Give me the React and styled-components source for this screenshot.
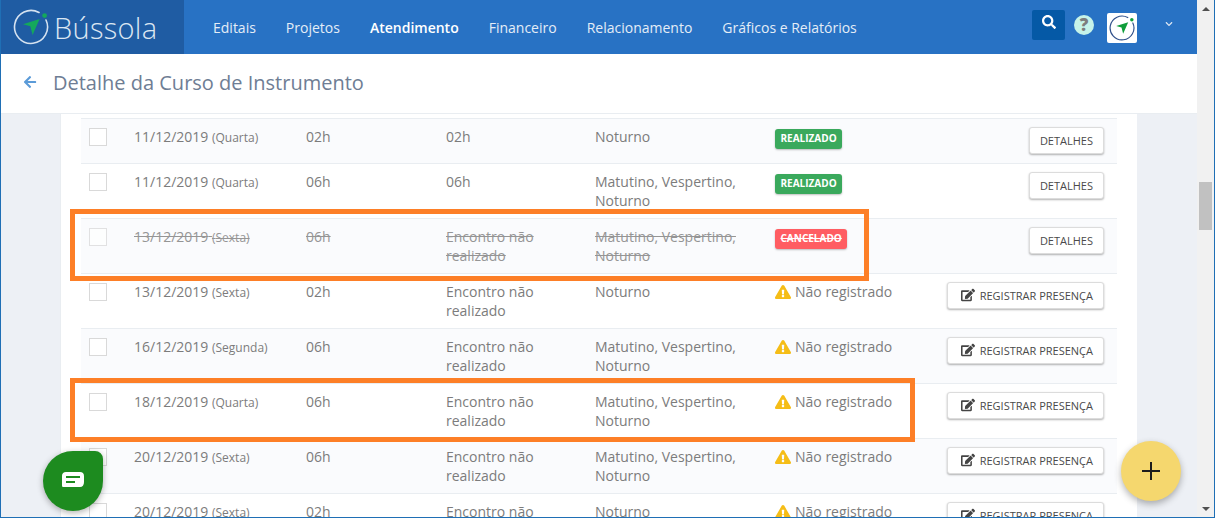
import React from 'react';
import styled, { createGlobalStyle } from 'styled-components';
import { FaArrowLeft, FaExclamationTriangle, FaEdit, FaSearch, FaChevronDown } from 'react-icons/fa';

const GlobalStyle = createGlobalStyle`
  html, body {
    margin: 0;
    padding: 0;
    height: 100%;
    overflow: hidden;
    font-family: "Open Sans", "Liberation Sans", sans-serif;
  }
  * { box-sizing: border-box; }
`;

// Window
const Frame = styled.div`
  position: relative;
  width: 1215px;
  height: 518px;
  display: flex;
  overflow: hidden;
  border-right: 1px solid #1f6fb5;
  border-bottom: 1px solid #1f6fb5;
  border-left: 1px solid #1f6fb5;
`;

const Main = styled.div`
  flex: 1;
  min-width: 0;
  display: flex;
  flex-direction: column;
  margin-left: -1px;
`;

const Scrollbar = styled.div`
  width: 17px;
  background: #f1f1f1;
  display: flex;
  flex-direction: column;
  align-items: center;
  justify-content: space-between;
  padding: 7px 0 6px;
  position: relative;
`;

const Arrow = styled.span`
  width: 0;
  height: 0;
  border-left: 4px solid transparent;
  border-right: 4px solid transparent;
  ${props => (props.$up ? `border-bottom: 4px solid #505050;` : `border-top: 4px solid #505050;`)}
`;

const Thumb = styled.div`
  position: absolute;
  top: 182px;
  left: 2px;
  width: 13px;
  height: 48px;
  background: #c1c1c1;
`;

// Top bar
const Header = styled.header`
  height: 54px;
  flex: none;
  display: flex;
  align-items: stretch;
  background: #2872c4;
`;

const Brand = styled.div`
  width: 184px;
  flex: none;
  background: #1f5ca3;
  display: flex;
  align-items: center;
  padding-left: 13px;
  gap: 5px;
`;

const BrandName = styled.span`
  font-size: 29px;
  font-weight: 300;
  color: #dbe6f2;
  letter-spacing: 0.3px;
`;

const Nav = styled.nav`
  flex: 1;
  display: flex;
  align-items: center;
  gap: 30px;
  padding-left: 29px;
`;

const NavItem = styled.a`
  font-size: 14px;
  color: ${props => (props.$active ? '#ffffff' : '#e4edf7')};
  font-weight: ${props => (props.$active ? 600 : 400)};
`;

const HeaderTools = styled.div`
  display: flex;
  align-items: flex-start;
  padding-top: 10px;
  width: 165px;
`;

const SearchButton = styled.div`
  width: 33px;
  height: 30px;
  background: #0559a6;
  border-radius: 2px;
  display: flex;
  align-items: center;
  justify-content: center;
  color: #ffffff;
  font-size: 14px;
  padding-bottom: 6px;
`;

const HelpIcon = styled.div`
  width: 20px;
  height: 20px;
  margin: 5px 0 0 9px;
  border-radius: 50%;
  background: #c6f3e9;
  color: #7d7d7d;
  font-size: 17px;
  font-weight: 800;
  line-height: 20px;
  text-align: center;
`;

const Avatar = styled.div`
  width: 30px;
  height: 30px;
  margin: 3px 0 0 13px;
  background: #ffffff;
  border-radius: 2px;
  display: flex;
  align-items: center;
  justify-content: center;
`;

const Caret = styled.div`
  margin: 9px 0 0 28px;
  color: #dbe6f2;
  font-size: 8px;
`;

// Page title
const TitleBar = styled.div`
  height: 60px;
  flex: none;
  background: #ffffff;
  border-bottom: 1px solid #e9edf1;
  display: flex;
  align-items: center;
  padding: 0 0 3px 23px;
  gap: 16px;
`;

const BackIcon = styled.span`
  display: flex;
  color: #5b9bd8;
  font-size: 14px;
`;

const Title = styled.h1`
  margin: 0;
  font-size: 20px;
  font-weight: 400;
  color: #6e7d94;
`;

// Card and rows
const Page = styled.div`
  flex: 1;
  min-height: 0;
  overflow: hidden;
  background: #edf0f5;
  padding: 0 60px;
`;

const Card = styled.div`
  background: #ffffff;
  padding: 4px 20px 0;
  height: 100%;
  border-left: 1px solid #e9edf1;
`;

const Row = styled.div`
  display: grid;
  grid-template-columns: 53px 172px 140px 149px 180px 1fr;
  border-top: 1px solid #e9edf1;
  padding: 8px 13px 8px 0;
  background: ${props => (props.$striped ? '#fafbfd' : '#ffffff')};
  font-size: 14px;
  line-height: 19px;
  color: #7c7c7c;
`;

const CheckBox = styled.span`
  display: block;
  width: 18px;
  height: 18px;
  margin: 1px 0 0 8px;
  background: #ffffff;
  border: 1px solid #d9d9d9;
  ${props => props.$muted && 'opacity: .75;'}
`;

const Cell = styled.div`
  ${props => props.$struck && `
    text-decoration: line-through;
    opacity: .8;
  `}
`;

const DayName = styled.small`
  font-size: 12px;
`;

const Badge = styled.span`
  display: inline-block;
  height: 20px;
  margin-top: 2px;
  padding: 0 5.5px;
  border-radius: 3px;
  background: ${props => (props.$cancelled ? '#ff5d62' : '#3aa95c')};
  box-shadow: 0 1px 2px rgba(0, 0, 0, .25);
  color: #ffffff;
  font-size: 10px;
  font-weight: 700;
  line-height: 19px;
  vertical-align: top;
  ${props => props.$cancelled && 'text-decoration: line-through;'}
`;

const Warning = styled.span`
  display: flex;
  align-items: center;
  gap: 4px;
  svg { color: #f5bd17; font-size: 16px; }
`;

const ActionCell = styled.div`
  display: flex;
  justify-content: flex-end;
  align-items: flex-start;
`;

const StatusSlot = styled.div`
  flex: 1;
`;

const ActionButton = styled.button`
  height: 27px;
  margin-bottom: 1px;
  padding: 0 10px 1px;
  display: flex;
  align-items: center;
  gap: 5px;
  background: #ffffff;
  border: 1px solid #dcdcdc;
  border-radius: 3px;
  box-shadow: 0 1px 2px rgba(0, 0, 0, .3);
  font-family: inherit;
  font-size: 11px;
  color: #4a4a4a;
  white-space: nowrap;
  svg { font-size: 14px; color: #444444; margin-left: 3px; }
`;

// Things lying over the table
const Highlight = styled.div`
  position: absolute;
  left: 69px;
  top: ${props => props.$top}px;
  width: ${props => props.$width}px;
  height: ${props => props.$height}px;
  border: 5px solid #fd7f27;
  pointer-events: none;
`;

const ChatButton = styled.div`
  position: absolute;
  left: 42px;
  top: 451px;
  width: 60px;
  height: 60px;
  background: #1d8b1f;
  border-radius: 50% 8px 50% 50%;
  box-shadow: 0 2px 6px rgba(0, 0, 0, .3);
  display: flex;
  align-items: center;
  justify-content: center;
`;

const AddButton = styled.div`
  position: absolute;
  left: 1120px;
  top: 441px;
  width: 60px;
  height: 60px;
  border-radius: 50%;
  background: #f5d76e;
  box-shadow: 0 3px 7px rgba(0, 0, 0, .3);
  display: flex;
  align-items: center;
  justify-content: center;
`;

const rows = [
  { date: '11/12/2019', day: 'Quarta', hours: '02h', done: '02h', shift: 'Noturno', status: 'done' },
  { date: '11/12/2019', day: 'Quarta', hours: '06h', done: '06h', shift: 'Matutino, Vespertino, Noturno', status: 'done' },
  { date: '13/12/2019', day: 'Sexta', hours: '06h', done: 'Encontro não realizado', shift: 'Matutino, Vespertino, Noturno', status: 'cancelled' },
  { date: '13/12/2019', day: 'Sexta', hours: '02h', done: 'Encontro não realizado', shift: 'Noturno', status: 'pending' },
  { date: '16/12/2019', day: 'Segunda', hours: '06h', done: 'Encontro não realizado', shift: 'Matutino, Vespertino, Noturno', status: 'pending' },
  { date: '18/12/2019', day: 'Quarta', hours: '06h', done: 'Encontro não realizado', shift: 'Matutino, Vespertino, Noturno', status: 'pending' },
  { date: '20/12/2019', day: 'Sexta', hours: '06h', done: 'Encontro não realizado', shift: 'Matutino, Vespertino, Noturno', status: 'pending' },
  { date: '20/12/2019', day: 'Sexta', hours: '02h', done: 'Encontro não realizado', shift: 'Noturno', status: 'pending' },
];

const navItems = ['Editais', 'Projetos', 'Atendimento', 'Financeiro', 'Relacionamento', 'Gráficos e Relatórios'];

function CompassLogo({ size, ring, arrow, dot }) {
  return (
    <svg width={size} height={size} viewBox="0 0 36 36" fill="none">
      <path d="M26 3.5A16.5 16.5 0 1 0 33 11" stroke={ring} strokeWidth="1.6" strokeLinecap="round" />
      <circle cx="31.6" cy="6.6" r="2.4" fill={dot} />
      <path d="M10 15.3L26.6 10L19.6 26L17.3 17.3Z" fill={arrow} />
    </svg>
  );
}

function StatusAndAction({ row }) {
  return (
    <>
      <StatusSlot>
        {row.status === 'done' && <Badge>REALIZADO</Badge>}
        {row.status === 'cancelled' && <Badge $cancelled>CANCELADO</Badge>}
        {row.status === 'pending' && <Warning><FaExclamationTriangle />Não registrado</Warning>}
      </StatusSlot>
      {row.status === 'pending'
        ? <ActionButton><FaEdit />REGISTRAR PRESENÇA</ActionButton>
        : <ActionButton>DETALHES</ActionButton>}
    </>
  );
}

function TableRow({ row, striped }) {
  const cancelled = row.status === 'cancelled';
  return (
    <Row $striped={striped}>
      <div><CheckBox $muted={cancelled} /></div>
      <Cell $struck={cancelled}>{row.date} <DayName>({row.day})</DayName></Cell>
      <Cell $struck={cancelled}>{row.hours}</Cell>
      <Cell $struck={cancelled}>{row.done}</Cell>
      <Cell $struck={cancelled}>{row.shift}</Cell>
      <ActionCell>
        <StatusAndAction row={row} />
      </ActionCell>
    </Row>
  );
}

function App() {
  return (
    <Frame>
      <GlobalStyle />
      <Main>
        <Header>
          <Brand>
            <CompassLogo size={36} ring="#d5e2f0" arrow="#14a85c" dot="#14a85c" />
            <BrandName>Bússola</BrandName>
          </Brand>
          <Nav>
            {navItems.map(item => (
              <NavItem key={item} $active={item === 'Atendimento'}>{item}</NavItem>
            ))}
          </Nav>
          <HeaderTools>
            <SearchButton><FaSearch /></SearchButton>
            <HelpIcon>?</HelpIcon>
            <Avatar><CompassLogo size={26} ring="#2f4f8a" arrow="#0f9d3a" dot="#0f9d3a" /></Avatar>
            <Caret><FaChevronDown /></Caret>
          </HeaderTools>
        </Header>
        <TitleBar>
          <BackIcon><FaArrowLeft /></BackIcon>
          <Title>Detalhe da Curso de Instrumento</Title>
        </TitleBar>
        <Page>
          <Card>
            {rows.map((row, i) => (
              <TableRow key={i} row={row} striped={i % 2 === 0} />
            ))}
          </Card>
        </Page>
      </Main>
      <Scrollbar>
        <Arrow $up />
        <Thumb />
        <Arrow />
      </Scrollbar>
      <Highlight $top={209} $width={799} $height={72} />
      <Highlight $top={378} $width={845} $height={64} />
      <ChatButton>
        <svg width="24" height="20" viewBox="0 0 24 20">
          <path d="M5 1H19C21.5 1 23 2.5 23 5V11C23 14 21.5 16 19 16H2.5C1.5 16 1 15.5 1 14.5V5C1 2.5 2.5 1 5 1Z" fill="#ffffff" />
          <rect x="5" y="5" width="14" height="2" fill="#1d8b1f" />
          <rect x="5" y="10" width="9" height="2" fill="#1d8b1f" />
        </svg>
      </ChatButton>
      <AddButton>
        <svg width="18" height="18" viewBox="0 0 18 18">
          <path d="M9 0V18M0 9H18" stroke="#1c1c1c" strokeWidth="2" />
        </svg>
      </AddButton>
    </Frame>
  );
}

export default App;
